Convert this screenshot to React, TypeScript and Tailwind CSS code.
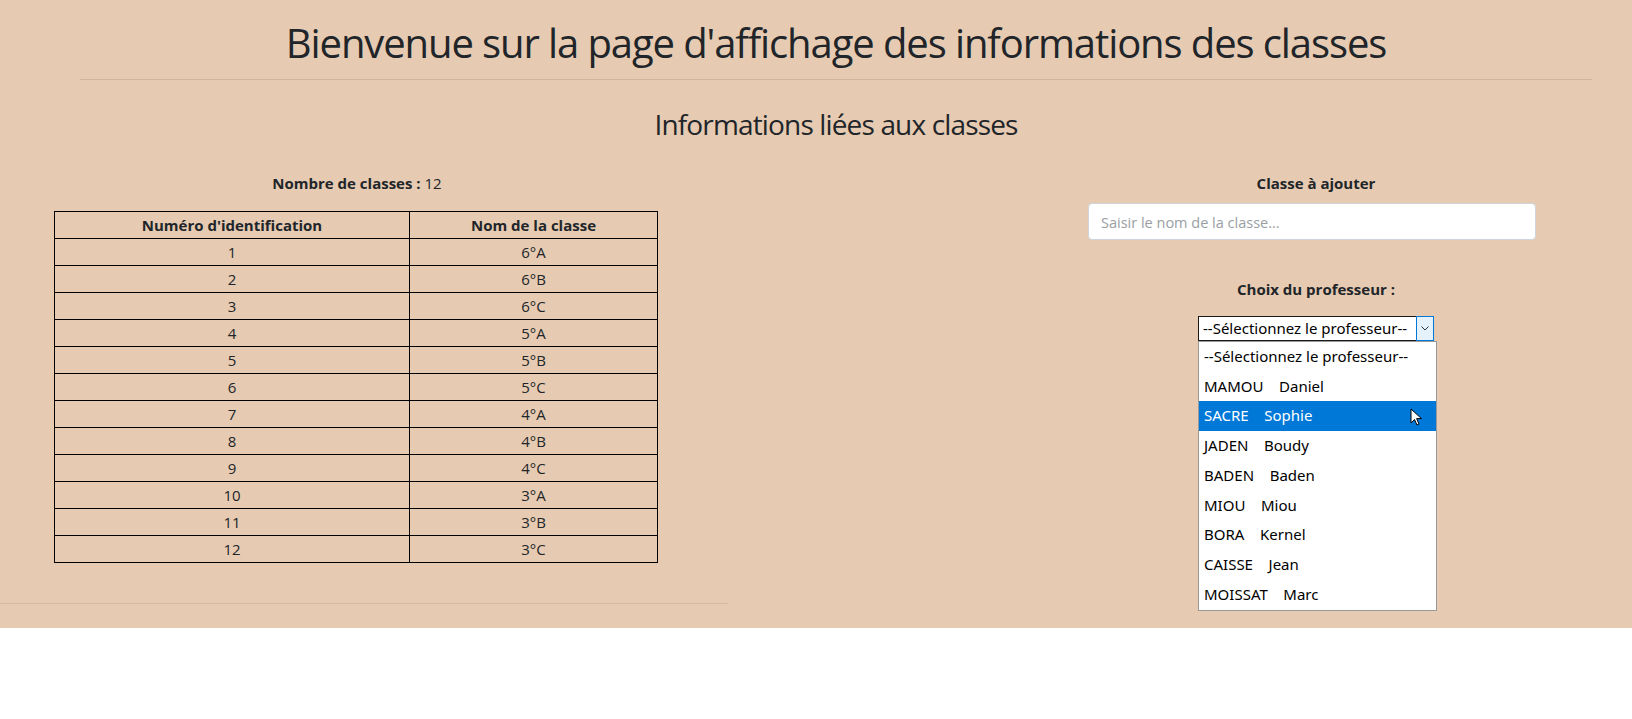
import React from "react";

const rows: [number, string][] = [
  [1, "6°A"], [2, "6°B"], [3, "6°C"], [4, "5°A"], [5, "5°B"], [6, "5°C"],
  [7, "4°A"], [8, "4°B"], [9, "4°C"], [10, "3°A"], [11, "3°B"], [12, "3°C"],
];

const profs: [string, string][] = [
  ["MAMOU", "Daniel"], ["SACRE", "Sophie"], ["JADEN", "Boudy"], ["BADEN", "Baden"],
  ["MIOU", "Miou"], ["BORA", "Kernel"], ["CAISSE", "Jean"], ["MOISSAT", "Marc"],
];

export default function App() {
  return (
    <div className="w-full bg-white" style={{ fontFamily: '"Open Sans", "Noto Sans", sans-serif' }}>
      <div className="h-[628px] bg-[#e6cbb2] text-[#212529] flex flex-col">
        <div className="ml-[80px] mr-[40px]">
          <h1 className="text-[40px] leading-[48px] text-center pt-[19px] pb-[12px] tracking-[-1.1px]">
            Bienvenue sur la page d'affichage des informations des classes
          </h1>
          <div className="border-t border-[#cfb59e]" />
          <h3 className="text-[28px] leading-[34px] text-center mt-[27px] tracking-[-0.85px]">
            Informations liées aux classes
          </h3>
        </div>
        <div className="flex mt-[32px]">
          <div className="w-[714px] flex flex-col">
            <p className="text-center text-[15px] leading-[20px]">
              <span className="font-bold">Nombre de classes :</span> 12
            </p>
            <table className="ml-[54px] mt-[18px] w-[604px] border-collapse text-[15px]">
              <thead>
                <tr className="h-[27px]">
                  <th className="border border-black w-[355px] font-bold text-center">Numéro d'identification</th>
                  <th className="border border-black font-bold text-center">Nom de la classe</th>
                </tr>
              </thead>
              <tbody>
                {rows.map(([id, name]) => (
                  <tr key={id} className="h-[27px]">
                    <td className="border border-black text-center leading-[20px]">{id}</td>
                    <td className="border border-black text-center leading-[20px]">{name}</td>
                  </tr>
                ))}
              </tbody>
            </table>
            <div className="mt-[40px] w-[728px] border-t border-[#d3baa3]" />
          </div>
          <div className="ml-auto w-[632px] flex flex-col">
            <p className="text-center text-[15px] leading-[20px] font-bold">Classe à ajouter</p>
            <div className="ml-[88px] mt-[10px] w-[448px] h-[37px] bg-white border border-[#ced4da] rounded-[4px] flex items-center px-[12px] pt-[2px] text-[14.5px] text-[#9a9ea3]">
              Saisir le nom de la classe...
            </div>
            <p className="text-center text-[15px] leading-[20px] font-bold mt-[39px]">Choix du professeur :</p>
            <div className="relative self-center mt-[17px]">
              <div className="flex h-[25px] w-[236px] border border-[#1a1a1a] bg-white">
                <div className="flex-1 text-[15px] leading-[23px] pl-[4px] text-black whitespace-nowrap overflow-hidden" style={{ fontFamily: '"Noto Sans", sans-serif' }}>
                  --Sélectionnez le professeur--
                </div>
                <div className="w-[18px] border border-[#0078d7] bg-[#e5f1fb] flex items-center justify-center -my-px -mr-px">
                  <svg width="8" height="5" viewBox="0 0 8 5">
                    <path d="M0.5 0.5 L4 4 L7.5 0.5" fill="none" stroke="#333" strokeWidth="1" />
                  </svg>
                </div>
              </div>
              <div className="absolute left-0 top-[25px] w-[239px] bg-white border border-[#999] text-[15px] text-black" style={{ fontFamily: '"Noto Sans", sans-serif' }}>
                <div className="h-[29.5px] leading-[29.5px] pl-[5px] whitespace-nowrap">--Sélectionnez le professeur--</div>
                {profs.map(([n, p]) => (
                  <div
                    key={n}
                    className={"h-[29.8px] leading-[29.8px] pl-[5px] whitespace-pre relative " + (n === "SACRE" ? "bg-[#0078d7] text-white" : "")}
                  >
                    {n + "    " + p}
                    {n === "SACRE" && (
                      <svg className="absolute left-[211px] top-[7px]" width="13" height="19" viewBox="0 0 13 19">
                        <path d="M1 1 L1 15 L4.5 11.5 L7 17 L9 16 L6.6 10.6 L11.5 10.6 Z" fill="white" stroke="black" strokeWidth="1" strokeLinejoin="round" />
                      </svg>
                    )}
                  </div>
                ))}
              </div>
            </div>
          </div>
        </div>
      </div>
    </div>
  );
}
